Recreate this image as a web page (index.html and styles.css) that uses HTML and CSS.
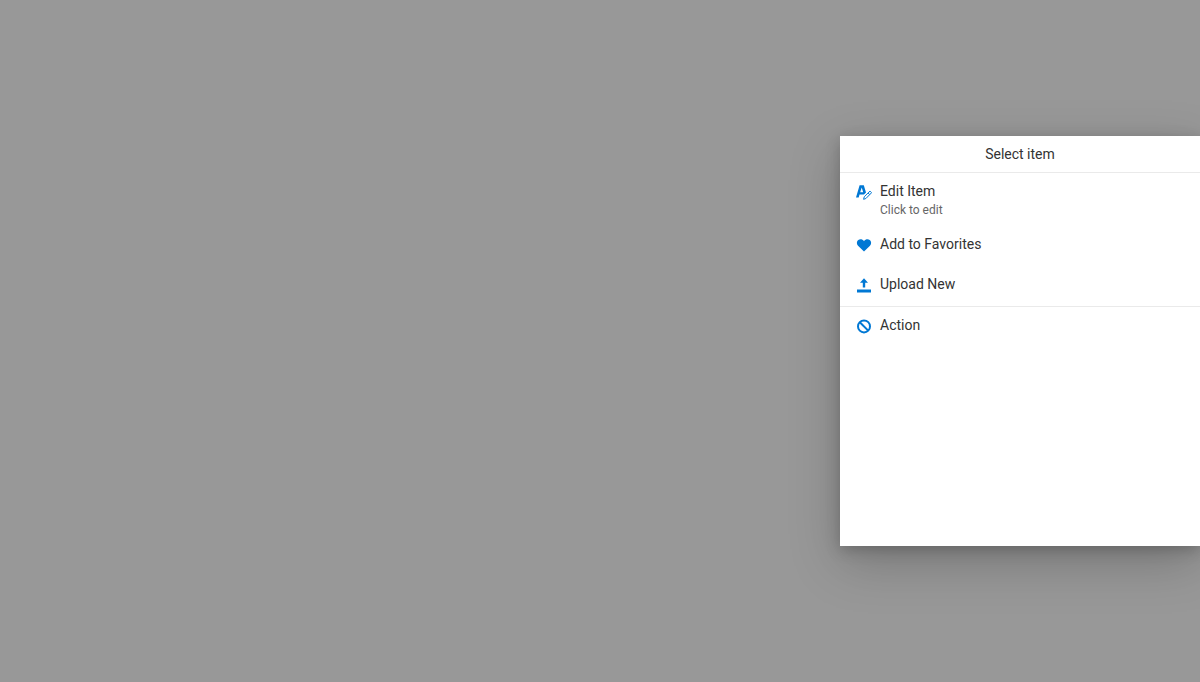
FILE: index.html
```html
<!DOCTYPE html>
<html lang="en">
<head>
<meta charset="utf-8">
<meta name="viewport" content="width=device-width, initial-scale=1">
<title>Select item</title>
<link rel="stylesheet" href="styles.css">
</head>
<body>
<div class="overlay">
  <section class="sheet" role="dialog" aria-labelledby="sheet-title">
    <h1 class="sheet-title" id="sheet-title">Select item</h1>
    <div class="group">
      <button type="button" class="item">
        <svg class="icon" viewBox="0 0 16 16" aria-hidden="true"><path fill-rule="evenodd" d="M0 13.500 3.600 1.200H7.800L10 8.500 8 10.600H3.500L2.700 13.500zM4.200 8.300H7.200L5.700 3.600z"/><g fill="none" stroke="currentColor" stroke-width="1"><path d="M7.600 15.300 8.200 12.900 14 7.100 15.600 8.700 9.900 14.500zM12.100 9l1.600 1.600"/></g></svg>
        <span class="text"><span class="name">Edit Item</span><span class="description">Click to edit</span></span>
      </button>
      <button type="button" class="item">
        <svg class="icon" viewBox="0 0 16 16" aria-hidden="true"><path d="M8 14.500 2 8.800C.300 7 .600 4.100 2.300 3 4.200 1.800 6.700 2.300 8 4.300c1.300-2 3.800-2.500 5.700-1.300 1.700 1.100 2 4 .300 5.800z"/></svg>
        <span class="text"><span class="name">Add to Favorites</span></span>
      </button>
      <button type="button" class="item">
        <svg class="icon" viewBox="0 0 16 16" aria-hidden="true"><path d="M8 1.300 12 5.800H9.200v4.700H6.800V5.800H4zM1 12.500h14v3H1z"/></svg>
        <span class="text"><span class="name">Upload New</span></span>
      </button>
    </div>
    <div class="group">
      <button type="button" class="item">
        <svg class="icon" viewBox="0 0 16 16" aria-hidden="true"><g fill="none" stroke="currentColor" stroke-width="2"><circle cx="8" cy="8.400" r="6"/><path d="m3.800 4.200 8.400 8.400"/></g></svg>
        <span class="text"><span class="name">Action</span></span>
      </button>
    </div>
  </section>
</div>
</body>
</html>
```
FILE: styles.css
```css
* {
  box-sizing: border-box;
}

body {
  margin: 0;
  font-family: Roboto, "Liberation Sans", sans-serif;
  font-size: 14px;
  line-height: 20px;
  color: #333;
}

.overlay {
  display: flex;
  align-items: center;
  justify-content: flex-end;
  height: 100vh;
  overflow: hidden;
  background: #989898;
}

.sheet {
  width: 360px;
  max-width: 100%;
  height: 60%;
  overflow: auto;
  background: #fff;
  box-shadow: 0 4px 14px rgba(0, 0, 0, 0.2), 0 16px 48px rgba(0, 0, 0, 0.22);
}

.sheet-title {
  margin: 0;
  padding: 8px 16px;
  font-size: 14px;
  font-weight: 400;
  text-align: center;
}

.group {
  border-top: 1px solid #eaeaea;
}

.item {
  display: flex;
  align-items: flex-start;
  gap: 8px;
  width: 100%;
  min-height: 40px;
  padding: 8px 16px;
  border: 0;
  background: transparent;
  color: inherit;
  font: inherit;
  text-align: left;
  cursor: pointer;
}

.icon {
  flex: none;
  width: 16px;
  height: 16px;
  margin-top: 3px;
  fill: currentColor;
  color: #0078d4;
}

.text {
  display: flex;
  flex-direction: column;
  gap: 1px;
}

.description {
  font-size: 12px;
  line-height: 16px;
  color: #666;
}
```
